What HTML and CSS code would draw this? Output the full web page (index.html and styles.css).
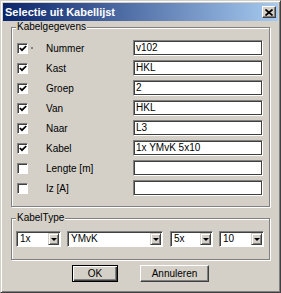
FILE: index.html
```html
<!DOCTYPE html>
<html>
<head>
<meta charset="utf-8">
<title>Selectie uit Kabellijst</title>
<link rel="stylesheet" href="styles.css">
</head>
<body>
<div class="window">
  <div class="titlebar">
    <span class="title">Selectie uit Kabellijst</span>
    <span class="close"><svg width="8" height="7" viewBox="0 0 8 7"><path d="M0.5 0.5 L7.5 6.5 M7.5 0.5 L0.5 6.5" stroke="#000" stroke-width="1.7" fill="none"/></svg></span>
  </div>

  <div class="group group-data">
    <span class="group-title">Kabelgegevens</span>
    <div class="row">
      <span class="cbcell"><span class="cb"><svg width="8" height="7" viewBox="0 0 8 7"><polyline points="0.8,3 3,5.2 7.2,1" stroke="#000" stroke-width="1.7" fill="none"/></svg></span><span class="focus"></span></span>
      <span class="label">Nummer</span>
      <span class="field">v102</span>
    </div>
    <div class="row">
      <span class="cbcell"><span class="cb"><svg width="8" height="7" viewBox="0 0 8 7"><polyline points="0.8,3 3,5.2 7.2,1" stroke="#000" stroke-width="1.7" fill="none"/></svg></span></span>
      <span class="label">Kast</span>
      <span class="field">HKL</span>
    </div>
    <div class="row">
      <span class="cbcell"><span class="cb"><svg width="8" height="7" viewBox="0 0 8 7"><polyline points="0.8,3 3,5.2 7.2,1" stroke="#000" stroke-width="1.7" fill="none"/></svg></span></span>
      <span class="label">Groep</span>
      <span class="field">2</span>
    </div>
    <div class="row">
      <span class="cbcell"><span class="cb"><svg width="8" height="7" viewBox="0 0 8 7"><polyline points="0.8,3 3,5.2 7.2,1" stroke="#000" stroke-width="1.7" fill="none"/></svg></span></span>
      <span class="label">Van</span>
      <span class="field">HKL</span>
    </div>
    <div class="row">
      <span class="cbcell"><span class="cb"><svg width="8" height="7" viewBox="0 0 8 7"><polyline points="0.8,3 3,5.2 7.2,1" stroke="#000" stroke-width="1.7" fill="none"/></svg></span></span>
      <span class="label">Naar</span>
      <span class="field">L3</span>
    </div>
    <div class="row">
      <span class="cbcell"><span class="cb"><svg width="8" height="7" viewBox="0 0 8 7"><polyline points="0.8,3 3,5.2 7.2,1" stroke="#000" stroke-width="1.7" fill="none"/></svg></span></span>
      <span class="label">Kabel</span>
      <span class="field">1x YMvK 5x10</span>
    </div>
    <div class="row">
      <span class="cbcell"><span class="cb"></span></span>
      <span class="label">Lengte [m]</span>
      <span class="field"></span>
    </div>
    <div class="row">
      <span class="cbcell"><span class="cb"></span></span>
      <span class="label">Iz [A]</span>
      <span class="field"></span>
    </div>
  </div>

  <div class="group group-type">
    <span class="group-title">KabelType</span>
    <div class="combos">
      <div class="combo c-count"><span class="val">1x</span><span class="drop"><span class="arrow"></span></span></div>
      <div class="combo c-type"><span class="val">YMvK</span><span class="drop"><span class="arrow"></span></span></div>
      <div class="combo c-cores"><span class="val">5x</span><span class="drop"><span class="arrow"></span></span></div>
      <div class="combo c-size"><span class="val">10</span><span class="drop"><span class="arrow"></span></span></div>
    </div>
  </div>

  <div class="buttons">
    <span class="btn btn-default btn-ok">OK</span>
    <span class="btn btn-cancel">Annuleren</span>
  </div>
</div>
</body>
</html>
```
FILE: styles.css
```css
html, body {
  margin: 0;
  padding: 0;
  background: #d4d0c8;
}

.window {
  box-sizing: border-box;
  width: 281px;
  height: 293px;
  background: #d4d0c8;
  border: 1px solid;
  border-color: #d4d0c8 #404040 #404040 #d4d0c8;
  box-shadow: inset 1px 1px 0 #ffffff, inset -1px -1px 0 #808080;
  padding: 2px;
  font-family: "Liberation Sans Narrow", "Liberation Sans", Arial, sans-serif;
  font-size: 10px;
  color: #000;
}

.titlebar {
  height: 18px;
  display: flex;
  align-items: center;
  justify-content: space-between;
  padding-left: 2px;
  background: linear-gradient(to right, #0a246a, #a6caf0);
}

.title {
  color: #fff;
  font-weight: bold;
  font-size: 11px;
}

.close {
  box-sizing: border-box;
  width: 14px;
  height: 12px;
  margin-right: 2px;
  display: flex;
  align-items: center;
  justify-content: center;
  background: #d4d0c8;
  border: 1px solid;
  border-color: #ffffff #404040 #404040 #ffffff;
  box-shadow: inset -1px -1px 0 #808080;
}

.group {
  position: relative;
  border: 1px solid #808080;
  box-shadow: inset 1px 1px 0 #ffffff, 1px 1px 0 #ffffff;
  margin: 0 8px;
}

.group-title {
  position: absolute;
  top: -7px;
  left: 4px;
  padding: 0 1px;
  line-height: 12px;
  background: #d4d0c8;
}

.group-data {
  margin-top: 6px;
  padding: 10px 0 8px 5px;
}

.row {
  display: grid;
  grid-template-columns: 29px 87px 130px;
  height: 20px;
  align-items: center;
}

.cbcell {
  display: flex;
  align-items: center;
}

.cb {
  box-sizing: border-box;
  width: 11px;
  height: 11px;
  background: #fff;
  border: 1px solid;
  border-color: #808080 #ffffff #ffffff #808080;
  box-shadow: inset 1px 1px 0 #404040;
  display: flex;
  align-items: center;
  justify-content: flex-start;
  padding-left: 1px;
}

.focus {
  width: 2px;
  height: 2px;
  margin-left: 3px;
  background: #808080;
}

.field {
  box-sizing: border-box;
  height: 16px;
  background: #fff;
  border: 1px solid;
  border-color: #808080 #ffffff #ffffff #808080;
  box-shadow: inset 0 0 0 1px #404040;
  padding-left: 2px;
  line-height: 14px;
  white-space: nowrap;
}

.group-type {
  margin-top: 11px;
  padding: 12px 0 12px 4px;
}

.combos {
  display: flex;
}

.combo {
  box-sizing: border-box;
  height: 16px;
  display: flex;
  align-items: stretch;
  background: #fff;
  border: 1px solid;
  border-color: #808080 #ffffff #ffffff #808080;
  box-shadow: inset 1px 1px 0 #404040;
  padding: 1px 1px 1px 1px;
}

.c-count { width: 45px; }
.c-type { width: 96px; margin-left: 6px; }
.c-cores { width: 43px; margin-left: 7px; }
.c-size { width: 45px; margin-left: 6px; }

.val {
  flex: 1;
  padding-left: 2px;
  line-height: 12px;
}

.drop {
  box-sizing: border-box;
  width: 11px;
  background: #d4d0c8;
  border: 1px solid;
  border-color: #d4d0c8 #404040 #404040 #d4d0c8;
  box-shadow: inset 1px 1px 0 #ffffff, inset -1px -1px 0 #808080;
  display: flex;
  align-items: center;
  justify-content: center;
}

.arrow {
  width: 0;
  height: 0;
  border-left: 3px solid transparent;
  border-right: 3px solid transparent;
  border-top: 3px solid #000;
}

.buttons {
  display: flex;
  justify-content: center;
  gap: 22px;
  margin-top: 5px;
  font-family: "Liberation Sans", Arial, sans-serif;
}

.btn {
  box-sizing: border-box;
  height: 17px;
  display: flex;
  align-items: center;
  justify-content: center;
  border: 1px solid;
  border-color: #ffffff #404040 #404040 #ffffff;
  box-shadow: inset -1px -1px 0 #808080;
}

.btn-default {
  border-color: #000;
  box-shadow: inset 1px 1px 0 #ffffff, inset -1px -1px 0 #404040, inset -2px -2px 0 #808080;
}

.btn-ok { width: 46px; }
.btn-cancel { width: 69px; }
```
